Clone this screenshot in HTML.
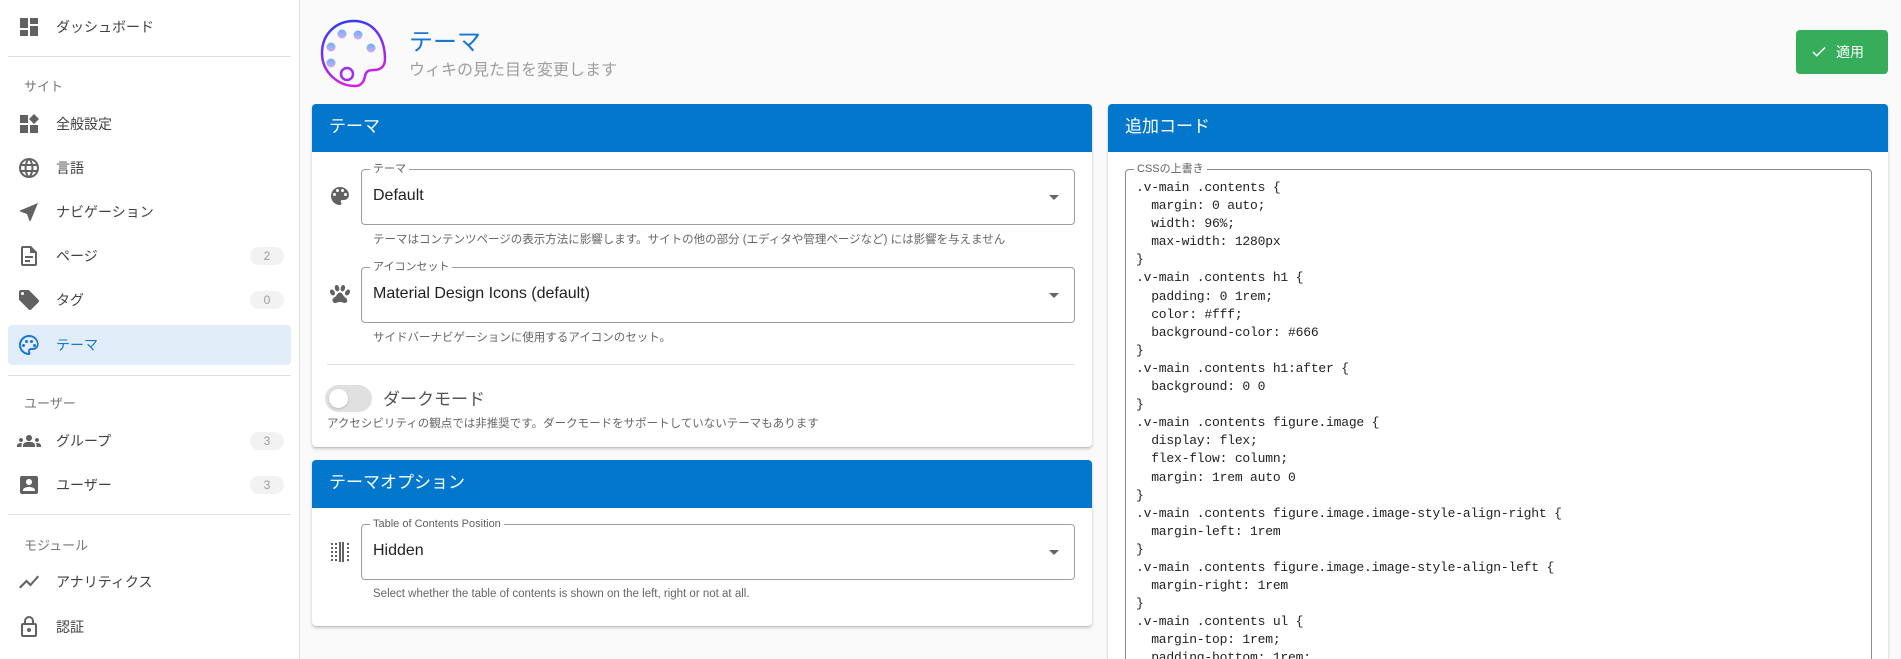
<!DOCTYPE html>
<html style="overflow:hidden;height:659px"><head><meta charset="utf-8"><style>
*{box-sizing:border-box;margin:0;padding:0}
body{width:1901px;height:659px;overflow:hidden;background:#fafafa;font-family:"Liberation Sans","Noto Sans CJK JP",sans-serif;color:#333;position:relative}
.a{position:absolute}
.side{left:0;top:0;width:300px;height:659px;background:#fff;border-right:1px solid #e0e0e0}
.it{position:absolute;left:0;width:300px;height:40px;display:flex;align-items:center;font-size:14px;color:#424242}
.it svg{position:absolute;left:17px;width:24px;height:24px;fill:#616161}
.it span{position:absolute;left:56px}
.badge{position:absolute;left:250px;width:34px;height:18px;border-radius:9px;background:#f2f2f2;color:#9e9e9e;font-size:12px;text-align:center;line-height:18px}
.hd{position:absolute;left:24px;font-size:13px;color:#757575}
.dv{position:absolute;left:8px;width:283px;height:1px;background:#e0e0e0}
.card{position:absolute;background:#fff;border-radius:4px;box-shadow:0 2px 3px rgba(0,0,0,.18),0 1px 1px rgba(0,0,0,.1);overflow:hidden}
.ch{height:48px;background:#0277cc;color:#fff;font-size:17px;padding-left:17px;line-height:46px}
.fld{position:absolute;border:1px solid #9e9e9e;border-radius:4px;height:56px}
.lab{position:absolute;top:-8px;left:8px;background:#fff;padding:0 3px;font-size:11px;color:#616161;line-height:14px}
.val{position:absolute;left:11px;top:17px;font-size:16px;color:#212121}
.arr{position:absolute;right:15px;top:25px;width:0;height:0;border-left:5px solid transparent;border-right:5px solid transparent;border-top:5px solid #666}
.hint{position:absolute;font-size:11.5px;color:#666}
.ic{position:absolute;width:24px;height:24px;fill:#616161}
pre{font-family:"Liberation Mono",monospace;font-size:13px;line-height:18.1px;color:#222;letter-spacing:-0.2px}
</style></head><body>
<div class="a side">
 <div class="it" style="top:7px"><svg viewBox="0 0 24 24"><path d="M3 13h8V3H3v10zm0 8h8v-6H3v6zm10 0h8V11h-8v10zm0-18v6h8V3h-8z"/></svg><span>ダッシュボード</span></div>
 <div class="dv" style="top:56px"></div>
 <div class="hd" style="top:76px">サイト</div>
 <div class="it" style="top:104px"><svg viewBox="0 0 24 24"><path d="M3 3h8v8H3zM3 13h8v8H3zM13 13h8v8h-8zM17 2l5 5-5 5-5-5z"/></svg><span>全般設定</span></div>
 <div class="it" style="top:148px"><svg viewBox="0 0 24 24"><path d="M12 2a10 10 0 100 20 10 10 0 000-20zm6.9 6h-3a15 15 0 00-1.4-3.6A8 8 0 0118.9 8zM12 4c.8 1.2 1.5 2.5 1.9 4h-3.8c.4-1.4 1.1-2.8 1.9-4zM4.3 14a8 8 0 010-4h3.4a16 16 0 000 4H4.3zm.8 2h3a15 15 0 001.4 3.6A8 8 0 015.1 16zm3-8h-3a8 8 0 014.3-3.6C8.8 5.6 8.4 6.8 8.1 8zM12 20c-.8-1.2-1.5-2.5-1.9-4h3.8c-.4 1.4-1.100 2.8-1.900 4zm2.3-6H9.7a14 14 0 010-4h4.6a14 14 0 010 4zm.3 5.6c.6-1.1 1.1-2.3 1.4-3.6h3a8 8 0 01-4.4 3.6zm1.7-5.6a16 16 0 000-4h3.4a8 8 0 010 4h-3.4z"/></svg><span>言語</span></div>
 <div class="it" style="top:192px"><svg viewBox="0 0 24 24"><path d="M21 3L3 10.5v1l7 2.5 2.5 7h1z"/></svg><span>ナビゲーション</span></div>
 <div class="it" style="top:236px"><svg viewBox="0 0 24 24"><path d="M14 2H6a2 2 0 00-2 2v16a2 2 0 002 2h12a2 2 0 002-2V8l-6-6zm4 18H6V4h7v5h5v11zM8 12h8v2H8zm0 4h5v2H8z"/></svg><span>ページ</span><div class="badge" style="top:11px">2</div></div>
 <div class="it" style="top:280px"><svg viewBox="0 0 24 24"><path d="M21.4 11.6l-9-9C12 2.2 11.6 2 11 2H4a2 2 0 00-2 2v7c0 .6.2 1.1.6 1.4l9 9c.4.4.9.6 1.4.6s1-.2 1.4-.6l7-7c.4-.4.6-.9.6-1.4s-.2-1-.6-1.4zM5.5 7a1.5 1.5 0 110-3 1.5 1.5 0 010 3z"/></svg><span>タグ</span><div class="badge" style="top:11px">0</div></div>
 <div class="a" style="left:8px;top:325px;width:283px;height:40px;background:#e1edf8;border-radius:4px"></div>
 <div class="it" style="top:325px;color:#1976d2"><svg viewBox="0 0 24 24" style="fill:#1976d2"><path d="M12 2C6.5 2 2 6.5 2 12s4.5 10 10 10c.9 0 1.5-.7 1.5-1.5 0-.4-.2-.7-.4-1-.2-.3-.4-.6-.4-1 0-.8.7-1.5 1.5-1.5H16c3.1 0 5.6-2.5 5.6-5.6C21.6 6 17.3 2 12 2zm0 18a8 8 0 010-16c4.4 0 8 3.1 8 7 0 2.2-1.8 4-4 4h-1.8a3.3 3.3 0 00-2.4 5.5.3.3 0 010 .2.5.5 0 01-.2.1zM6.5 11a1.5 1.5 0 110 3 1.5 1.5 0 010-3zm3-4a1.5 1.5 0 110 3 1.5 1.5 0 010-3zm5 0a1.5 1.5 0 110 3 1.5 1.5 0 010-3zm3 4a1.5 1.5 0 110 3 1.5 1.5 0 010-3z"/></svg><span>テーマ</span></div>
 <div class="dv" style="top:375px"></div>
 <div class="hd" style="top:393px">ユーザー</div>
 <div class="it" style="top:421px"><svg viewBox="0 0 24 24"><path d="M12 12.75c1.6 0 3.1.4 4.3.9 1.1.5 1.7 1.6 1.7 2.8V18H6v-1.6c0-1.2.7-2.3 1.8-2.8 1.2-.5 2.6-.9 4.200-.9zM4 13c1.1 0 2-.9 2-2s-.9-2-2-2-2 .9-2 2 .9 2 2 2zm1.1 1.1A7 7 0 004 14c-1 0-1.9.2-2.8.6A2 2 0 000 16.4V18h4.5v-1.6c0-.8.2-1.6.6-2.3zM20 13c1.1 0 2-.9 2-2s-.9-2-2-2-2 .9-2 2 .9 2 2 2zm4 3.4c0-.8-.5-1.5-1.2-1.8A7 7 0 0020 14c-.4 0-.8 0-1.1.1.4.7.6 1.5.6 2.3V18H24v-1.6zM12 6c1.7 0 3 1.3 3 3s-1.3 3-3 3-3-1.3-3-3 1.3-3 3-3z"/></svg><span>グループ</span><div class="badge" style="top:11px">3</div></div>
 <div class="it" style="top:465px"><svg viewBox="0 0 24 24"><path d="M3 5v14a2 2 0 002 2h14a2 2 0 002-2V5a2 2 0 00-2-2H5a2 2 0 00-2 2zm12 4c0 1.7-1.3 3-3 3s-3-1.3-3-3 1.3-3 3-3 3 1.3 3 3zm-9 8c0-2 4-3.1 6-3.1s6 1.1 6 3.1v1H6v-1z"/></svg><span>ユーザー</span><div class="badge" style="top:11px">3</div></div>
 <div class="dv" style="top:514px"></div>
 <div class="hd" style="top:535px">モジュール</div>
 <div class="it" style="top:562px"><svg viewBox="0 0 24 24"><path d="M3.5 18.5l6-6 4 4L22 6.9l-1.4-1.4-7.1 8-4-4L2 17z"/></svg><span>アナリティクス</span></div>
 <div class="it" style="top:607px"><svg viewBox="0 0 24 24"><path d="M18 8h-1V6A5 5 0 007 6v2H6a2 2 0 00-2 2v10a2 2 0 002 2h12a2 2 0 002-2V10a2 2 0 00-2-2zM9 6a3 3 0 016 0v2H9V6zm9 14H6V10h12v10zm-6-3a2 2 0 100-4 2 2 0 000 4z"/></svg><span>認証</span></div>
</div>

<svg class="a" style="left:318px;top:17px" width="72" height="74" viewBox="0 0 72 74">
<defs><linearGradient id="g" x1="0" y1="0" x2="0.3" y2="1"><stop offset="0" stop-color="#2040ff"/><stop offset="1" stop-color="#d020e0"/></linearGradient>
<linearGradient id="d" x1="0" y1="0" x2="0" y2="1"><stop offset="0" stop-color="#64b4f6"/><stop offset="1" stop-color="#d8a8f8"/></linearGradient></defs>
<path d="M36 4C17 4 4 18 4 36c0 20 17 33 33 33 7 0 9-5 10-10 1-5 4-6 9-6 7 0 11-4 11-11C67 20 55 4 36 4z" fill="none" stroke="url(#g)" stroke-width="2.5"/>
<circle cx="24" cy="17" r="4.5" fill="url(#d)"/><circle cx="40" cy="18" r="4.5" fill="url(#d)"/><circle cx="13" cy="30" r="4.5" fill="url(#d)"/><circle cx="53" cy="31" r="4.5" fill="url(#d)"/><circle cx="13" cy="46" r="4.5" fill="url(#d)"/>
<circle cx="29" cy="57" r="6" fill="none" stroke="#a030e8" stroke-width="2.5"/>
</svg>
<div class="a" style="left:409px;top:22px;font-size:24px;color:#1976d2">テーマ</div>
<div class="a" style="left:409px;top:56px;font-size:16px;color:#9e9e9e">ウィキの見た目を変更します</div>
<div class="a" style="left:1796px;top:30px;width:92px;height:44px;background:#36ad5a;border-radius:4px;color:#fff;font-size:14px;line-height:44px;padding-left:40px">適用</div>
<svg class="a" style="left:1810px;top:43px" width="18" height="18" viewBox="0 0 24 24"><path d="M4 12l5 5L20 6" stroke="#fff" stroke-width="2" fill="none"/></svg>

<div class="card" style="left:312px;top:104px;width:780px;height:343px">
 <div class="ch">テーマ</div>
 <svg class="ic" style="left:16px;top:80px" viewBox="0 0 24 24"><path d="M12 3a9 9 0 000 18c.8 0 1.5-.7 1.5-1.5 0-.4-.1-.7-.4-1-.2-.3-.4-.6-.4-1 0-.8.7-1.5 1.5-1.5H16c2.8 0 5-2.2 5-5 0-4.4-4-8-9-8zm-5.5 9a1.5 1.5 0 110-3 1.5 1.5 0 010 3zm3-4a1.5 1.5 0 110-3 1.5 1.5 0 010 3zm5 0a1.5 1.5 0 110-3 1.5 1.5 0 010 3zm3 4a1.5 1.5 0 110-3 1.5 1.5 0 010 3z"/></svg>
 <div class="fld" style="left:49px;top:65px;width:714px"><div class="lab">テーマ</div><div class="val">Default</div><div class="arr"></div></div>
 <div class="hint" style="left:61px;top:127px">テーマはコンテンツページの表示方法に影響します。サイトの他の部分 (エディタや管理ページなど) には影響を与えません</div>
 <svg class="ic" style="left:16px;top:178px" viewBox="0 0 24 24"><path d="M8.35 3c1.18-.17 2.430 1.12 2.790 2.9.36 1.77-.29 3.35-1.47 3.53-1.17.18-2.43-1.11-2.8-2.89C6.5 4.77 7.17 3.19 8.35 3m7.15 0c1.19.19 1.85 1.77 1.5 3.54-.38 1.78-1.63 3.07-2.81 2.89-1.19-.17-1.84-1.75-1.47-3.53.36-1.78 1.61-3.07 2.78-2.9M3 7.6c1.14-.49 2.69.4 3.5 1.95.76 1.58.5 3.24-.63 3.73-1.13.49-2.67-.39-3.46-1.96C1.62 9.75 1.9 8.08 3 7.6m18 0c1.1.48 1.38 2.15.59 3.72-.79 1.57-2.33 2.45-3.46 1.96-1.13-.49-1.39-2.15-.63-3.73C18.31 8 19.86 7.11 21 7.6m-1.67 10.78c.04.94-.68 1.98-1.54 2.37-1.79.82-3.91-.88-5.9-.88-1.99 0-4.13 1.77-5.89.88-1-.49-1.69-1.79-1.56-2.870.18-1.49 1.97-2.29 3.03-3.38 1.41-1.41 2.41-4.06 4.42-4.06 2 0 3.06 2.62 4.41 4.06 1.11 1.22 2.96 2.25 3.03 3.88z"/></svg>
 <div class="fld" style="left:49px;top:163px;width:714px"><div class="lab">アイコンセット</div><div class="val">Material Design Icons (default)</div><div class="arr"></div></div>
 <div class="hint" style="left:61px;top:225px">サイドバーナビゲーションに使用するアイコンのセット。</div>
 <div class="a" style="left:15px;top:260px;width:748px;height:1px;background:#e0e0e0"></div>
 <div class="a" style="left:13px;top:281px;width:47px;height:27px;border-radius:14px;background:#e0e0e0"></div>
 <div class="a" style="left:17px;top:285px;width:19px;height:19px;border-radius:50%;background:#fff;box-shadow:0 1px 2px rgba(0,0,0,.2)"></div>
 <div class="a" style="left:71px;top:281px;font-size:17px;color:#555">ダークモード</div>
 <div class="hint" style="left:15px;top:311px">アクセシビリティの観点では非推奨です。ダークモードをサポートしていないテーマもあります</div>
</div>

<div class="card" style="left:312px;top:460px;width:780px;height:166px">
 <div class="ch">テーマオプション</div>
 <svg class="ic" style="left:16px;top:80px" viewBox="0 0 24 24"><path d="M11 2h2v20h-2zM14 2h2v20h-2z" /><path d="M3 3h2v2H3zM3 7h2v2H3zM3 11h2v2H3zM3 15h2v2H3zM3 19h2v2H3zM7 3h2v2H7zM7 7h2v2H7zM7 11h2v2H7zM7 15h2v2H7zM7 19h2v2H7zM19 3h2v2h-2zM19 7h2v2h-2zM19 11h2v2h-2zM19 15h2v2h-2zM19 19h2v2h-2z"/></svg>
 <div class="fld" style="left:49px;top:64px;width:714px"><div class="lab">Table of Contents Position</div><div class="val">Hidden</div><div class="arr"></div></div>
 <div class="hint" style="left:61px;top:128px">Select whether the table of contents is shown on the left, right or not at all.</div>
</div>

<div class="card" style="left:1108px;top:104px;width:780px;height:555px;border-radius:4px 4px 0 0">
 <div class="ch">追加コード</div>
 <div class="fld" style="left:17px;top:65px;width:747px;height:520px;border-color:#8a8a8a">
  <div class="lab">CSSの上書き</div>
  <pre class="a" style="left:10px;top:9px">.v-main .contents {
  margin: 0 auto;
  width: 96%;
  max-width: 1280px
}
.v-main .contents h1 {
  padding: 0 1rem;
  color: #fff;
  background-color: #666
}
.v-main .contents h1:after {
  background: 0 0
}
.v-main .contents figure.image {
  display: flex;
  flex-flow: column;
  margin: 1rem auto 0
}
.v-main .contents figure.image.image-style-align-right {
  margin-left: 1rem
}
.v-main .contents figure.image.image-style-align-left {
  margin-right: 1rem
}
.v-main .contents ul {
  margin-top: 1rem;
  padding-bottom: 1rem;
}</pre>
 </div>
</div>
</body></html>
